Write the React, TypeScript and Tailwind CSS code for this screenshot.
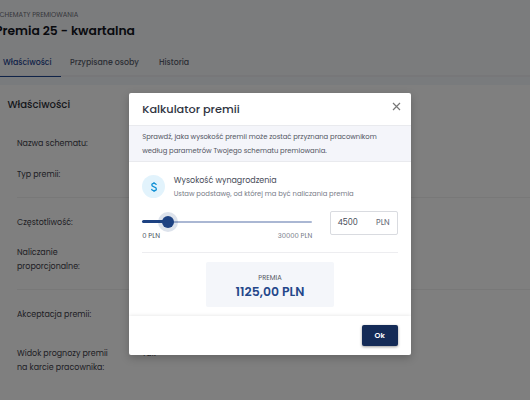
import type { ReactNode } from "react";
import clsx from "clsx";

const tabs = [
  { label: "Właściwości", className: "w-[61px] pl-[3px] text-[#1f4690]", active: true },
  { label: "Przypisane osoby", className: "w-[98px] pl-[9px] text-[#59606c]" },
  { label: "Historia", className: "text-[#59606c]" },
];

function PropertyRow({ className, children }: { className?: string; children: ReactNode }) {
  return (
    <div className={clsx("text-[7.95px] leading-[13.5px] whitespace-nowrap text-[#3c4049]", className)}>
      {children}
    </div>
  );
}

function PropertiesPage() {
  return (
    <div className="flex h-full flex-col bg-white">
      <header className="h-[77px] shrink-0 border-b-2 border-[#eeeff3] bg-[#f7f8fb]">
        <p className="-ml-[4.5px] pt-[10px] text-[6.7px] leading-[10px] text-[#6d7078]">SCHEMATY PREMIOWANIA</p>
        <h1 className="-ml-[5px] text-[12.35px] leading-[21px] font-semibold text-[#12151d]">Premia 25 - kwartalna</h1>
        <nav className="mt-[8px] flex h-[28px] text-[7.85px] leading-[28px] font-medium whitespace-nowrap">
          {tabs.map((tab) => (
            <div key={tab.label} className={clsx(tab.className, tab.active && "border-b-[1.5px] border-[#1f4690]")}>
              {tab.label}
            </div>
          ))}
        </nav>
      </header>
      <div className="h-2 shrink-0 bg-[#f3f6fb]" />
      <main className="flex-1 overflow-hidden">
        <h2 className="mt-[10px] ml-[7.5px] h-[19px] text-[10.1px] leading-[19px] font-medium text-[#2c3038]">Właściwości</h2>
        <div className="ml-[17px]">
          <div className="h-[84px] border-b border-[#f0f0f0] pt-[23px]">
            <PropertyRow>Nazwa schematu:</PropertyRow>
            <PropertyRow className="mt-[17px]">Typ premii:</PropertyRow>
          </div>
          <div className="h-[92px] border-b border-[#f0f0f0] pt-[18px]">
            <PropertyRow>Częstotliwość:</PropertyRow>
            <PropertyRow className="mt-[16.5px]">
              Naliczanie
              <br />
              proporcjonalne:
            </PropertyRow>
          </div>
          <div className="pt-[18px]">
            <PropertyRow>Akceptacja premii:</PropertyRow>
            <PropertyRow className="mt-[25.5px] flex">
              <span className="w-[125px]">
                Widok prognozy premii
                <br />
                na karcie pracownika:
              </span>
              <span>Tak</span>
            </PropertyRow>
          </div>
        </div>
      </main>
    </div>
  );
}

function SalarySlider() {
  return (
    <div className="w-[170px]">
      <div className="relative flex h-[21px] items-center">
        <div className="h-[3px] w-[26px] rounded-l-full bg-[#1d4282]" />
        <div className="h-[2px] flex-1 rounded-r-full bg-[#aab7d3]" />
        <div className="absolute left-[15.5px] flex size-5 items-center justify-center rounded-full bg-[#1d4282]/15">
          <div className="size-3 rounded-full bg-[#1d4282]" />
        </div>
      </div>
      <div className="flex justify-between text-[6.8px] leading-[8px]">
        <span className="text-[#4a5060]">0 PLN</span>
        <span className="text-[#747987]">30000 PLN</span>
      </div>
    </div>
  );
}

function BonusCalculator() {
  return (
    <section className="flex h-[262px] w-[282.5px] flex-col overflow-hidden rounded-[2px] bg-white">
      <header className="flex h-8 shrink-0 items-center justify-between pr-[10.5px] pl-[13.5px]">
        <h2 className="text-[11.3px] leading-4 font-medium text-[#30343f]">Kalkulator premii</h2>
        <svg viewBox="0 0 9 9" className="mb-[5px] size-[9px]" stroke="#777" strokeWidth="1.2">
          <path d="M1 1l7 7M8 1l-7 7" />
        </svg>
      </header>
      <p className="h-[37px] shrink-0 border-y border-[#e9eaee] bg-[#f4f5fa] pt-[4px] pl-[13.5px] text-[6.8px] leading-[13.5px] whitespace-nowrap text-[#50545f]">
        Sprawdź, jaka wysokość premii może zostać przyznana pracownikom
        <br />
        według parametrów Twojego schematu premiowania.
      </p>
      <div className="flex-1 px-[13.5px] pt-[13px]">
        <div className="flex h-[23px] items-center gap-[8.5px]">
          <div className="flex size-[23px] items-center justify-center rounded-full bg-[#e2f3fc]">
            <svg viewBox="0 0 8 12" className="h-3 w-2" fill="none" stroke="#1592d5" strokeWidth="1.3">
              <path d="M6.3 4C6.1 2.9 5.2 2.3 4 2.3S1.8 3 1.8 4.1C1.8 6.4 6.4 5.3 6.4 7.9 6.4 9 5.4 9.7 4 9.7S1.7 9 1.5 7.9M4 1v1.4M4 9.6V11" />
            </svg>
          </div>
          <div className="pt-[2px] whitespace-nowrap">
            <h3 className="text-[7.95px] leading-[12px] text-[#464b58]">Wysokość wynagrodzenia</h3>
            <p className="text-[6.8px] leading-[13px] text-[#777b87]">Ustaw podstawę, od której ma być naliczania premia</p>
          </div>
        </div>
        <div className="mt-[13px] flex h-[42px] items-start justify-between border-b border-[#ededf0]">
          <SalarySlider />
          <div className="flex h-[23.5px] w-[68px] items-center justify-between rounded-[2px] border border-[#d9dbe0] px-[7px] pt-px text-[8px]">
            <span className="text-[#424754]">4500</span>
            <span className="text-[#646976]">PLN</span>
          </div>
        </div>
        <div className="mx-auto mt-[9px] flex h-[45px] w-[128px] flex-col items-center rounded-[2px] bg-[#f4f6fa] pt-[11px]">
          <span className="text-[6.7px] leading-[9px] text-[#535762]">PREMIA</span>
          <strong className="text-[12.45px] leading-[19px] font-semibold text-[#24478a]">1125,00 PLN</strong>
        </div>
      </div>
      <footer className="flex h-[39px] shrink-0 justify-end pt-[9px] pr-[13.5px] shadow-[0_0_4px_rgba(0,0,0,0.12)]">
        <button className="h-[21px] w-[36px] rounded-[2px] bg-[#142b57] text-[7.5px] leading-[21px] font-semibold text-white shadow-[0_1px_3px_rgba(0,0,0,0.4)]">
          Ok
        </button>
      </footer>
    </section>
  );
}

export default function App() {
  return (
    <div className="relative h-[400px] w-[530px] overflow-hidden font-['Poppins','Inter',sans-serif]">
      <PropertiesPage />
      <div className="absolute inset-0 bg-black/50 pt-[93px] pl-[128.75px]">
        <div className="w-fit rounded-[2px] shadow-[0_3px_8px_rgba(0,0,0,0.22)]">
          <BonusCalculator />
        </div>
      </div>
    </div>
  );
}
